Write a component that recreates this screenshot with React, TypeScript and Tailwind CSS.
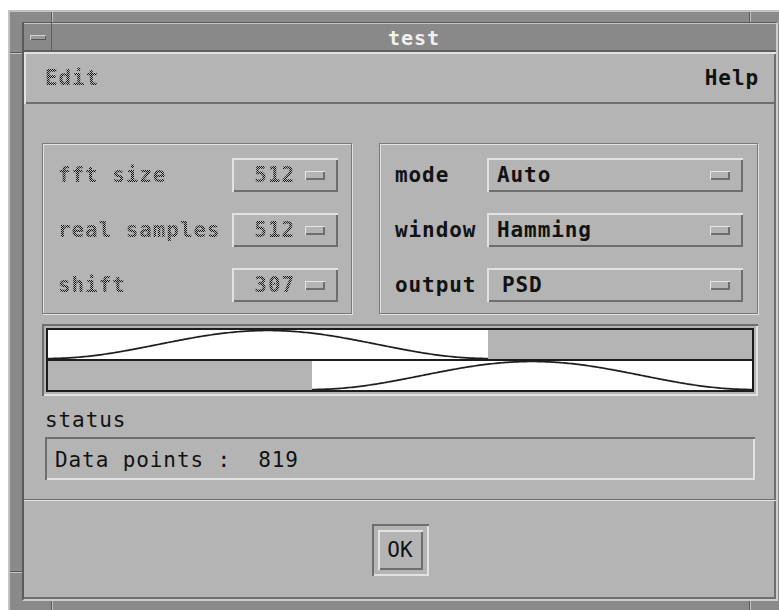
import React from 'react';

const mono = "font-['DejaVu_Sans_Mono',monospace] text-[21px] leading-[22px] tracking-[0.9px]";
const raised = 'shadow-[inset_2px_2px_0_#e2e2e2,inset_-2px_-2px_0_#6e6e6e]';
const sunken = 'shadow-[inset_2px_2px_0_#6e6e6e,inset_-2px_-2px_0_#e2e2e2]';
// Motif style "insensitive" text: glyphs drawn through a 50% dot pattern
const stipple =
  'bg-[image:repeating-conic-gradient(#141414_0%_25%,transparent_0%_50%)] bg-[length:2px_2px] bg-clip-text text-transparent';

const Indicator = () => (
  <span className="block h-[9px] w-[20px] shrink-0 bg-[#b4b4b4] shadow-[inset_1px_1px_0_#e6e6e6,inset_-2px_-2px_0_#6e6e6e]" />
);

// hann-shaped weighting curve, min -> bottom edge, max -> top edge
const curve = (w: number, h: number) => {
  const pts: string[] = [];
  for (let i = 0; i <= w; i += 2) {
    const v = (1 - Math.cos((2 * Math.PI * i) / w)) / 2;
    pts.push(`${i},${(h - 0.5 - v * (h - 1)).toFixed(2)}`);
  }
  return pts.join(' ');
};

const WindowCurve = () => (
  <svg className="block h-full w-full" viewBox="0 0 440 29" preserveAspectRatio="none">
    <polyline points={curve(440, 29)} fill="none" stroke="#1e1e1e" strokeWidth="1.7" />
  </svg>
);

const FrameNotch = ({ className }: { className: string }) => (
  <div className={`absolute ${className}`} />
);

const leftRows = [
  { label: 'fft size', value: '512' },
  { label: 'real samples', value: '512' },
  { label: 'shift', value: '307' },
];

const rightRows = [
  { label: 'mode', value: 'Auto', shift: '' },
  { label: 'window', value: 'Hamming', shift: '' },
  { label: 'output', value: 'PSD', shift: 'ml-[5px]' },
];

export default function App() {
  return (
    <div className={`h-[610px] w-[779px] overflow-hidden bg-white ${mono}`}>
      {/* window manager frame */}
      <div className="relative ml-2 mt-[10px] h-[610px] w-[790px] border-l-2 border-t-2 border-[#c2c2c2] bg-[#8a8a8a] pl-[12px] pt-[10px]">
        <FrameNotch className="left-[41px] top-0 h-[10px] w-[2px] border-l border-r border-l-[#5a5a5a] border-r-[#c2c2c2]" />
        <FrameNotch className="left-[739px] top-0 h-[10px] w-[2px] border-l border-r border-l-[#5a5a5a] border-r-[#c2c2c2]" />
        <FrameNotch className="left-0 top-[40px] h-[2px] w-[12px] border-b border-t border-b-[#c2c2c2] border-t-[#5a5a5a]" />
        <FrameNotch className="left-0 top-[559px] h-[2px] w-[12px] border-b border-t border-b-[#c2c2c2] border-t-[#5a5a5a]" />
        <FrameNotch className="left-[41px] top-[589px] h-[12px] w-[2px] border-l border-r border-l-[#5a5a5a] border-r-[#c2c2c2]" />
        <FrameNotch className="left-[739px] top-[589px] h-[12px] w-[2px] border-l border-r border-l-[#5a5a5a] border-r-[#c2c2c2]" />

        <div className="w-[756px] border-l-2 border-t border-[#5a5a5a] border-b-2 border-r-2 border-b-[#cdcdcd] border-r-[#cdcdcd]">
          {/* title bar */}
          <div className="flex h-[29px] bg-[#898989] shadow-[inset_0_1px_0_#c6c6c6,inset_0_-2px_0_#5e5e5e]">
            <div className="flex w-[28px] items-center justify-center border-r border-[#5e5e5e]">
              <span className="block h-[5px] w-[16px] bg-[#9c9c9c] shadow-[inset_1px_1px_0_#d0d0d0,inset_-1px_-1px_0_#555555]" />
            </div>
            <div className="flex flex-1 items-center justify-center text-[20px] font-bold text-[#f0f0f0]">test</div>
          </div>

          {/* client area */}
          <div className="flex h-[547px] flex-col bg-[#b4b4b4] text-[#121212] shadow-[inset_-2px_-2px_0_#6e6e6e]">
            {/* menu bar */}
            <div className={`flex h-[52px] shrink-0 items-center justify-between pl-[21px] pr-[17px] ${raised}`}>
              <span className={`font-bold ${stipple}`}>Edit</span>
              <span className="font-bold">Help</span>
            </div>

            {/* work area */}
            <div className="flex shrink-0 flex-col px-[18px] pb-[19px] pt-[39px]">
              <div className="flex gap-[27px]">
                <div className="flex h-[171px] w-[310px] flex-col gap-[21px] border border-[#7a7a7a] pl-[15px] pt-[14px] shadow-[1px_1px_0_#e2e2e2,inset_1px_1px_0_#e2e2e2]">
                  {leftRows.map((r) => (
                    <div key={r.label} className="flex h-[34px] items-center">
                      <span className={`w-[174px] whitespace-pre font-bold ${stipple}`}>{r.label}</span>
                      <div className={`flex h-[34px] w-[106px] items-center justify-end gap-[10px] pr-[13px] ${raised}`}>
                        <span className={`font-bold ${stipple}`}>{r.value}</span>
                        <Indicator />
                      </div>
                    </div>
                  ))}
                </div>

                <div className="flex h-[171px] w-[379px] flex-col gap-[21px] border border-[#7a7a7a] pl-[15px] pt-[14px] shadow-[1px_1px_0_#e2e2e2,inset_1px_1px_0_#e2e2e2]">
                  {rightRows.map((r) => (
                    <div key={r.label} className="flex h-[34px] items-center">
                      <span className="w-[92px] font-bold">{r.label}</span>
                      <div className={`flex h-[34px] w-[256px] items-center justify-between pl-[10px] pr-[13px] ${raised}`}>
                        <span className={`font-bold ${r.shift}`}>{r.value}</span>
                        <Indicator />
                      </div>
                    </div>
                  ))}
                </div>
              </div>

              {/* analysis window overlap */}
              <div className={`mt-[10px] h-[72px] p-[4px] ${sunken}`}>
                <div className="flex h-full flex-col gap-[2px] border-2 border-[#1c1c1c] bg-[#1c1c1c]">
                  <div className="flex h-[29px]">
                    <div className="w-[440px] bg-white">
                      <WindowCurve />
                    </div>
                    <div className="flex-1 bg-[#b4b4b4]" />
                  </div>
                  <div className="flex h-[29px]">
                    <div className="w-[264px] bg-[#b4b4b4]" />
                    <div className="flex-1 bg-white">
                      <WindowCurve />
                    </div>
                  </div>
                </div>
              </div>

              <div className="mt-[13px] pl-[3px]">status</div>
              <div className={`mx-[3px] mt-[6px] flex h-[43px] items-center whitespace-pre pl-[10px] pt-[3px] ${sunken}`}>
                Data points :  819
              </div>
            </div>

            <div className="h-[2px] shrink-0 border-t border-[#6e6e6e] bg-[#e2e2e2]" />

            {/* action area */}
            <div className="flex flex-1 items-center justify-center">
              <div className={`p-[6px] ${sunken}`}>
                <button className={`flex h-[40px] w-[45px] items-center justify-center bg-[#b4b4b4] tracking-normal ${raised}`}>
                  OK
                </button>
              </div>
            </div>
          </div>
        </div>
      </div>
    </div>
  );
}
